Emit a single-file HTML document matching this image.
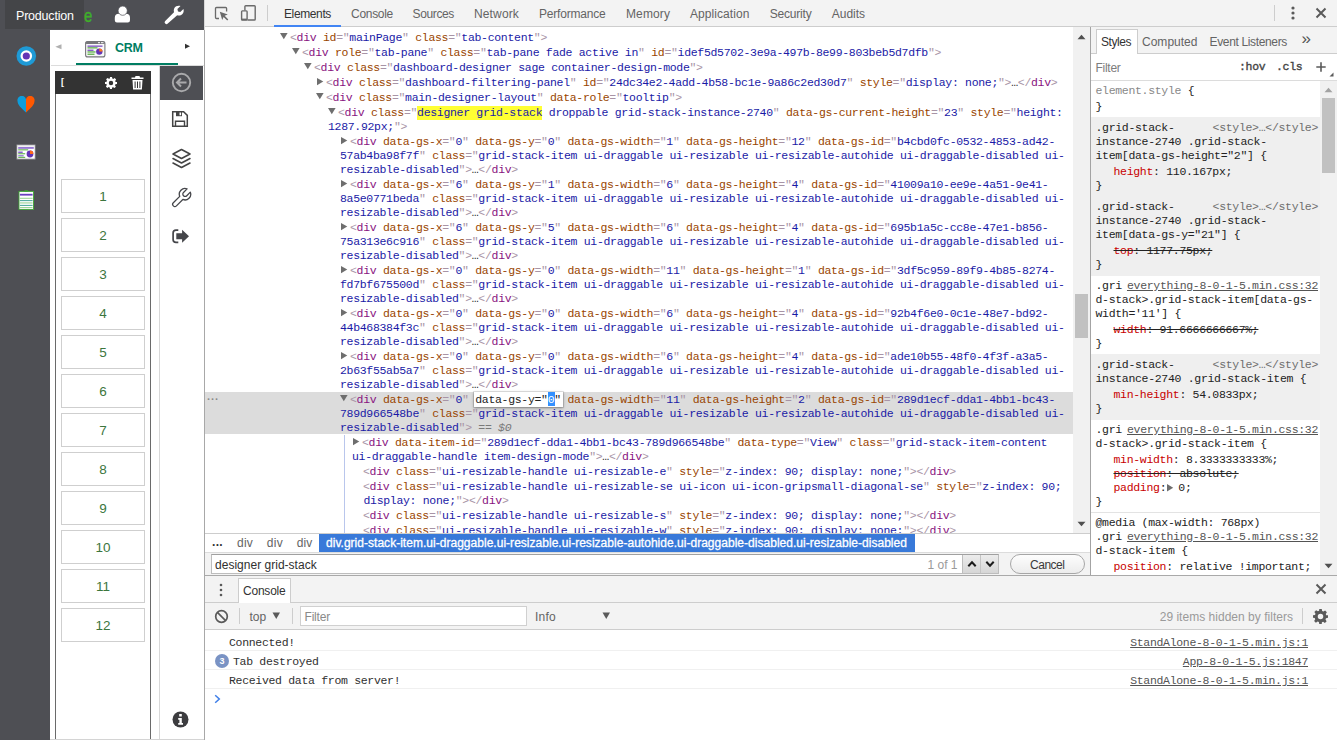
<!DOCTYPE html>
<html lang="en">
<head>
<meta charset="utf-8">
<title>CRM - DevTools</title>
<style>
*{box-sizing:border-box;margin:0;padding:0}
html,body{width:1337px;height:740px;overflow:hidden;background:#fff}
body{position:relative;font-family:"Liberation Sans",sans-serif;font-size:12px;color:#333}
.abs{position:absolute}
/* ---------- left app ---------- */
#app{position:absolute;left:0;top:0;width:205px;height:740px;background:#fff;overflow:hidden}
#side{position:absolute;left:0;top:0;width:50px;height:740px;background:#4e4f54}
#topbar{position:absolute;left:0;top:0;width:204px;height:30px;background:#4e4f54}
#tip{position:absolute;left:5px;top:0;width:79px;height:29px;background:#444548;color:#fff;font-size:12.5px;line-height:32px;overflow:hidden;padding-left:11px;letter-spacing:-.2px}
/* ---------- devtools ---------- */
#dt{position:absolute;left:205px;top:0;width:1132px;height:740px;background:#fff}
.mono,.ln{font-family:"Liberation Mono",monospace;font-size:11.5px}
.ln{position:absolute;white-space:pre;line-height:14px;height:14px;color:#2a2a2a;letter-spacing:-.314px}
.t{color:#a894a6}.n{color:#881280}.a{color:#994500}.v{color:#1a1aa6}
.hl{background:#ffff33;display:inline-block;height:14px;line-height:14px;vertical-align:top}
.tri{position:absolute;fill:#6e6e6e}
.edit{color:#222}
.selch{color:#fff}
.dollar{color:#7a7a7a;font-style:italic}
.sl{color:#222}
.p{color:#c80000}.g{color:#888}
.st{text-decoration:line-through}
.lk1{color:#6e6e6e;left:auto}
.lk2{color:#545454;text-decoration:underline;left:auto}
.ptri{fill:#6e6e6e;margin:0 -2.5px -1px 1px}
.s{position:absolute;white-space:pre;font-size:12px;line-height:16px;height:16px;color:#5a5a5a}
.nb{left:61px;width:84px;height:34px;border:1px solid #cfcfcf;background:#fff;text-align:center;font-size:13.5px;line-height:34px;color:#3c763d}
</style>
</head>
<body>
<div id="app">
 <div id="side"></div>
 <div id="topbar"></div>
 <div class="abs" style="left:84.300px;top:4px;color:#3fae2a;-webkit-text-stroke:.45px #3fae2a;font-size:18.500px;line-height:24px;transform:scaleX(.8);transform-origin:0 0">e</div>
 <div id="tip">Production</div>
 <!-- user -->
 <svg class="abs" style="left:114px;top:6px" width="17" height="17" viewBox="0 0 17 17"><path d="M.8 14.300V11.800A4 4 0 0 1 4.800 7.800H12A4 4 0 0 1 16 11.800V14.300A2.200 2.200 0 0 1 13.800 16.500H3A2.200 2.200 0 0 1 .8 14.300z" fill="#fff"/><circle cx="8.700" cy="4.700" r="4.600" fill="#fff" stroke="#4e4f54" stroke-width=".7"/></svg>
 <!-- wrench -->
 <svg class="abs" style="left:163px;top:5px" width="21" height="20" viewBox="0 0 21 20"><path d="M2.200 18.600a1.800 1.800 0 0 1 0-2.600L11 7.200C10.300 4.800 11.200 2.400 13.200 1.300c1.300-.7 3-.8 4.300-.3L14.400 4.100l.6 2.300 2.300 .6 3.100-3.100c.5 1.400 .4 3-.4 4.300-1.200 1.900-3.500 2.800-5.800 2.100L4.800 18.600a1.800 1.800 0 0 1-2.600 0z" fill="#fff"/></svg>
 <!-- side icons -->
 <svg class="abs" style="left:15px;top:45px" width="23" height="22" viewBox="0 0 23 22"><circle cx="11.300" cy="11" r="9.800" fill="#1e9ad6"/><circle cx="11.300" cy="11" r="5.800" fill="#fff"/><circle cx="11.300" cy="11" r="3.600" fill="#6435b5"/></svg>
 <svg class="abs" style="left:17px;top:96px" width="18" height="17" viewBox="0 0 18 17"><path d="M9 16.500C4 12 .5 8.500 .5 5A4.300 4.300 0 0 1 9 3.300z" fill="#0d9ddb"/><path d="M9 16.500C14 12 17.500 8.500 17.500 5A4.300 4.300 0 0 0 9 3.300z" fill="#ff5800"/></svg>
 <svg class="abs" style="left:16px;top:144px" width="20" height="16" viewBox="0 0 20 16"><rect x=".6" y=".6" width="18.800" height="14.800" rx="1.200" fill="#fff" stroke="#727276" stroke-width="1.200"/><rect x="1.200" y="1.200" width="17.600" height="1.200" fill="#dcdce0"/><rect x="2.200" y="3.300" width="15.600" height="1.300" fill="#6a3fc0"/><rect x="2.200" y="5.300" width="10" height="1.100" fill="#5fb04a"/><rect x="2.200" y="7.600" width="4.500" height="1.200" fill="#6a3fc0"/><rect x="2.200" y="9.200" width="7" height="1.100" fill="#5fb04a"/><rect x="2.200" y="11.200" width="5.500" height="1.200" fill="#8a6fd0"/><rect x="2.200" y="12.800" width="7" height="1.100" fill="#5fb04a"/><circle cx="14" cy="10" r="3.400" fill="#6435b5"/><path d="M14 10V6.600A3.400 3.400 0 0 1 17.400 10z" fill="#ff6a1a"/></svg>
 <svg class="abs" style="left:18px;top:190px" width="17" height="21" viewBox="0 0 17 21"><rect x="1" y="1.400" width="14.500" height="18" fill="#fff" stroke="#3fa535" stroke-width=".9"/><rect x="6.200" y=".3" width="4" height="1.500" rx=".7" fill="#3fa535"/><rect x="1.900" y="3.800" width="12.700" height="1.800" fill="#6a3fc0"/><rect x="1.900" y="7.800" width="12.700" height=".9" fill="#86c97e"/><rect x="1.900" y="10.200" width="12.700" height=".9" fill="#2f9a8c"/><rect x="1.900" y="12.500" width="12.700" height=".9" fill="#86c97e"/><rect x="1.900" y="14.900" width="12.700" height=".9" fill="#2f9a8c"/><rect x="1.900" y="17.200" width="12.700" height=".9" fill="#86c97e"/></svg>
 <!-- tab row -->
 <svg class="abs" style="left:55px;top:44px" width="7" height="6" viewBox="0 0 7 6"><path d="M6.500 .3V5.300L.3 2.800z" fill="#b0b0b0"/></svg>
 <svg class="abs" style="left:85px;top:41px" width="21" height="17" viewBox="0 0 21 17"><rect x=".6" y=".6" width="19.300" height="15.300" rx="2" fill="#f8f8f8" stroke="#77777b" stroke-width="1.100"/><rect x=".6" y=".6" width="19.300" height="2.400" rx="1" fill="#77777b"/><rect x="13" y="1.200" width="2" height="1" fill="#fff"/><rect x="16" y="1.200" width="2.500" height="1" fill="#fff"/><rect x="2.500" y="4.500" width="15" height="1.300" fill="#7a4fc0"/><rect x="2.500" y="6.200" width="10" height="1.300" fill="#5fb04a"/><rect x="2.500" y="8.600" width="6" height="1.300" fill="#7a4fc0"/><rect x="2.500" y="10.300" width="8" height="1.300" fill="#5fb04a"/><rect x="2.500" y="12.600" width="7" height="1.300" fill="#5fb04a"/><circle cx="14.300" cy="10.600" r="3.200" fill="#6435b5"/><path d="M14.300 10.600V7.400A3.200 3.200 0 0 1 17.500 10.600z" fill="#ff7a1a"/></svg>
 <div class="abs" style="left:115px;top:40px;font-weight:bold;font-size:12.500px;line-height:16px;color:#007d62;letter-spacing:-.3px">CRM</div>
 <svg class="abs" style="left:184px;top:43px" width="7" height="7" viewBox="0 0 7 7"><path d="M1 .8V5.800L6 3.300z" fill="#333"/></svg>
 <div class="abs" style="left:51px;top:65px;width:153px;height:1px;background:#dcdcdc"></div>
 <div class="abs" style="left:76px;top:63px;width:102px;height:2px;background:#007d62"></div>
 <!-- widget panel -->
 <div class="abs" style="left:55px;top:71px;width:96px;height:680px;border:1px solid #6a6a6a;background:#fff"></div>
 <div class="abs" style="left:55px;top:71px;width:96px;height:23px;background:#333"></div>
 <div class="abs" style="left:61px;top:76px;color:#fff;font-size:9px;font-weight:bold;line-height:12px">[</div>
 <svg class="abs" style="left:105px;top:77px" width="12" height="12" viewBox="0 0 12 12"><path fill="#fff" fill-rule="evenodd" d="M5 0h2l.3 1.600 1 .4 1.400-.9 1.400 1.400-.9 1.400 .4 1L12 5v2l-1.600 .3-.4 1 .9 1.400-1.400 1.400-1.400-.9-1 .4L7 12H5l-.3-1.600-1-.4-1.400 .9L.9 9.500l.9-1.400-.4-1L0 7V5l1.600-.3 .4-1-.9-1.400L2.500 .9l1.400 .9 1-.4zM6 3.800a2.200 2.200 0 1 0 0 4.400 2.200 2.200 0 0 0 0-4.400z"/></svg>
 <svg class="abs" style="left:131px;top:76px" width="13" height="14" viewBox="0 0 13 14"><path fill="#fff" d="M4.500 0h4l.5 1.500H12.500V3H.5V1.500H4zM1.500 4h10l-.6 9.500H2.100zM3.600 5.500v6.500h1V5.500zM6 5.500v6.500h1V5.500zM8.400 5.500v6.500h1V5.500z" fill-rule="evenodd"/></svg>
 <div class="abs nb" style="top:179px">1</div>
<div class="abs nb" style="top:218px">2</div>
<div class="abs nb" style="top:257px">3</div>
<div class="abs nb" style="top:296px">4</div>
<div class="abs nb" style="top:335px">5</div>
<div class="abs nb" style="top:374px">6</div>
<div class="abs nb" style="top:413px">7</div>
<div class="abs nb" style="top:452px">8</div>
<div class="abs nb" style="top:491px">9</div>
<div class="abs nb" style="top:530px">10</div>
<div class="abs nb" style="top:569px">11</div>
<div class="abs nb" style="top:608px">12</div>

 <!-- tool column -->
 <div class="abs" style="left:159px;top:66px;width:1px;height:674px;background:#d8d8d8"></div>
 <div class="abs" style="left:160px;top:66px;width:43px;height:34px;background:#4e4f54"></div>
 <svg class="abs" style="left:171px;top:72px" width="21" height="21" viewBox="0 0 21 21"><circle cx="10.500" cy="10.500" r="8.700" fill="none" stroke="#a9a9ab" stroke-width="1.900"/><path d="M15.500 10.500H6.500M10 6.500l-4 4 4 4" fill="none" stroke="#a9a9ab" stroke-width="2"/></svg>
 <!-- save -->
 <svg class="abs" style="left:171px;top:110px" width="18" height="18" viewBox="0 0 18 18"><path d="M1.700 1.700H12.600L16.300 5.400V16.300H1.700z" fill="none" stroke="#444" stroke-width="1.500"/><rect x="5" y="1.700" width="6" height="4.500" fill="#444"/><rect x="8.500" y="2.500" width="1.600" height="2.800" fill="#fff"/><path d="M4.500 16V11.200h9V16" fill="none" stroke="#444" stroke-width="1.400"/></svg>
 <!-- layers -->
 <svg class="abs" style="left:171px;top:148px" width="21" height="21" viewBox="0 0 21 21"><path d="M10.500 1.500L19 6l-8.500 4.500L2 6z" fill="none" stroke="#444" stroke-width="1.600" stroke-linejoin="round"/><path d="M2 10.500l8.500 4.500 8.500-4.500M2 15l8.500 4.500L19 15" fill="none" stroke="#444" stroke-width="1.600" stroke-linejoin="round" stroke-linecap="round"/></svg>
 <!-- wrench outline -->
 <svg class="abs" style="left:171px;top:187px" width="22" height="22" viewBox="0 0 22 22"><path transform="translate(14 7.200) rotate(45)" d="M-2.300 -5.220V-.2A2.300 2.300 0 0 0 2.300 -.2V-5.220A5.700 5.700 0 0 1 2.200 5.260V14.300A2.200 2.200 0 0 1 -2.200 14.300V5.260A5.700 5.700 0 0 1 -2.300 -5.220Z" fill="#fff" stroke="#45464a" stroke-width="1.300" stroke-linejoin="round"/></svg>
 <!-- sign out -->
 <svg class="abs" style="left:172px;top:229px" width="18" height="15" viewBox="0 0 18 15"><path d="M6.300 1.100H4A2.900 2.900 0 0 0 1.100 4v6.400A2.900 2.900 0 0 0 4 13.300h2.300" fill="none" stroke="#45464a" stroke-width="1.700"/><path d="M4.300 4.200h5.800V.7L17 7.200 10.100 13.700v-3.500H4.300z" fill="#45464a"/></svg>
 <!-- info -->
 <svg class="abs" style="left:171.500px;top:710.500px" width="17" height="17" viewBox="0 0 17 17"><circle cx="8.500" cy="8.500" r="8" fill="#3c3c3f"/><path d="M7.200 3h2.600v2.400H7.200zM6.200 7h3.600v5h1.200v1.800H6.200V12h1.200V8.800H6.200z" fill="#fff"/></svg>
 <div class="abs" style="left:50px;top:739px;width:155px;height:1px;background:#d4d4d4"></div>
 <div class="abs" style="left:204px;top:0;width:1px;height:30px;background:#d8d8d8"></div>
 <div class="abs" style="left:204px;top:30px;width:1px;height:710px;background:#a8a8a8"></div>
</div>

<div id="dtbg" class="abs" style="left:205px;top:0;width:1132px;height:740px;background:#fff"></div>
<!-- elements tree -->
<div class="abs" style="left:205px;top:27px;width:868px;height:506px;overflow:hidden">
 <div class="abs" style="left:-205px;top:-27px;width:1337px;height:740px">
  <div class="abs" style="left:205px;top:392px;width:868px;height:42px;background:#dcdcdc"></div>
  <div class="abs" style="left:344px;top:435px;width:1px;height:100px;background:#b9c6ec"></div>
  <div class="abs" style="left:207px;top:390px;color:#8a8a8a;font-size:11px;line-height:12px;letter-spacing:1px;font-weight:bold">...</div>
  <div class="abs" style="left:474px;top:392px;width:89px;height:15px;background:#fff;box-shadow:0 0 0 1px rgba(0,0,0,.10),0 1px 3px rgba(0,0,0,.38)"></div>
  <div class="abs" style="left:548px;top:392px;width:7px;height:14px;background:#3390ff"></div>
<div class="ln" style="left:290px;top:31px"><span class="t">&lt;</span><span class="n">div</span> <span class="a">id</span><span class="t">="</span><span class="v">mainPage</span><span class="t">"</span> <span class="a">class</span><span class="t">="</span><span class="v">tab-content</span><span class="t">"</span><span class="t">&gt;</span></div>
<svg class="tri" style="left:280px;top:33px" width="8" height="7" viewBox="0 0 8 7"><path d="M0 0H7.6L3.8 6.2Z"/></svg>
<div class="ln" style="left:302px;top:46px"><span class="t">&lt;</span><span class="n">div</span> <span class="a">role</span><span class="t">="</span><span class="v">tab-pane</span><span class="t">"</span> <span class="a">class</span><span class="t">="</span><span class="v">tab-pane fade active in</span><span class="t">"</span> <span class="a">id</span><span class="t">="</span><span class="v">idef5d5702-3e9a-497b-8e99-803beb5d7dfb</span><span class="t">"</span><span class="t">&gt;</span></div>
<svg class="tri" style="left:292px;top:48px" width="8" height="7" viewBox="0 0 8 7"><path d="M0 0H7.6L3.8 6.2Z"/></svg>
<div class="ln" style="left:314px;top:61px"><span class="t">&lt;</span><span class="n">div</span> <span class="a">class</span><span class="t">="</span><span class="v">dashboard-designer sage container-design-mode</span><span class="t">"</span><span class="t">&gt;</span></div>
<svg class="tri" style="left:304px;top:63px" width="8" height="7" viewBox="0 0 8 7"><path d="M0 0H7.6L3.8 6.2Z"/></svg>
<div class="ln" style="left:326px;top:76px"><span class="t">&lt;</span><span class="n">div</span> <span class="a">class</span><span class="t">="</span><span class="v">dashboard-filtering-panel</span><span class="t">"</span> <span class="a">id</span><span class="t">="</span><span class="v">24dc34e2-4add-4b58-bc1e-9a86c2ed30d7</span><span class="t">"</span> <span class="a">style</span><span class="t">="</span><span class="v">display: none;</span><span class="t">"</span><span class="t">&gt;</span>…<span class="t">&lt;/</span><span class="n">div</span><span class="t">&gt;</span></div>
<svg class="tri" style="left:317px;top:78px" width="7" height="8" viewBox="0 0 7 8"><path d="M0 0V7.200L6.300 3.600Z"/></svg>
<div class="ln" style="left:326px;top:91px"><span class="t">&lt;</span><span class="n">div</span> <span class="a">class</span><span class="t">="</span><span class="v">main-designer-layout</span><span class="t">"</span> <span class="a">data-role</span><span class="t">="</span><span class="v">tooltip</span><span class="t">"</span><span class="t">&gt;</span></div>
<svg class="tri" style="left:316px;top:93px" width="8" height="7" viewBox="0 0 8 7"><path d="M0 0H7.6L3.8 6.2Z"/></svg>
<div class="ln" style="left:338px;top:106px"><span class="t">&lt;</span><span class="n">div</span> <span class="a">class</span><span class="t">="</span><span class="v"><span class="hl">designer grid-stack</span> droppable grid-stack-instance-2740</span><span class="t">"</span> <span class="a">data-gs-current-height</span><span class="t">="</span><span class="v">23</span><span class="t">"</span> <span class="a">style</span><span class="t">="</span><span class="v">height:</span></div>
<div class="ln" style="left:328px;top:120px"><span class="v">1287.92px;</span><span class="t">"</span><span class="t">&gt;</span></div>
<svg class="tri" style="left:328px;top:108px" width="8" height="7" viewBox="0 0 8 7"><path d="M0 0H7.6L3.8 6.2Z"/></svg>
<div class="ln" style="left:350px;top:135px"><span class="t">&lt;</span><span class="n">div</span> <span class="a">data-gs-x</span><span class="t">="</span><span class="v">0</span><span class="t">"</span> <span class="a">data-gs-y</span><span class="t">="</span><span class="v">0</span><span class="t">"</span> <span class="a">data-gs-width</span><span class="t">="</span><span class="v">1</span><span class="t">"</span> <span class="a">data-gs-height</span><span class="t">="</span><span class="v">12</span><span class="t">"</span> <span class="a">data-gs-id</span><span class="t">="</span><span class="v">b4cbd0fc-0532-4853-ad42-</span></div>
<div class="ln" style="left:340px;top:149px"><span class="v">57ab4ba98f7f</span><span class="t">"</span> <span class="a">class</span><span class="t">="</span><span class="v">grid-stack-item ui-draggable ui-resizable ui-resizable-autohide ui-draggable-disabled ui-</span></div>
<div class="ln" style="left:340px;top:163px"><span class="v">resizable-disabled</span><span class="t">"</span><span class="t">&gt;</span>…<span class="t">&lt;/</span><span class="n">div</span><span class="t">&gt;</span></div>
<svg class="tri" style="left:341px;top:137px" width="7" height="8" viewBox="0 0 7 8"><path d="M0 0V7.200L6.300 3.600Z"/></svg>
<div class="ln" style="left:350px;top:178px"><span class="t">&lt;</span><span class="n">div</span> <span class="a">data-gs-x</span><span class="t">="</span><span class="v">6</span><span class="t">"</span> <span class="a">data-gs-y</span><span class="t">="</span><span class="v">1</span><span class="t">"</span> <span class="a">data-gs-width</span><span class="t">="</span><span class="v">6</span><span class="t">"</span> <span class="a">data-gs-height</span><span class="t">="</span><span class="v">4</span><span class="t">"</span> <span class="a">data-gs-id</span><span class="t">="</span><span class="v">41009a10-ee9e-4a51-9e41-</span></div>
<div class="ln" style="left:340px;top:192px"><span class="v">8a5e0771beda</span><span class="t">"</span> <span class="a">class</span><span class="t">="</span><span class="v">grid-stack-item ui-draggable ui-resizable ui-resizable-autohide ui-draggable-disabled ui-</span></div>
<div class="ln" style="left:340px;top:206px"><span class="v">resizable-disabled</span><span class="t">"</span><span class="t">&gt;</span>…<span class="t">&lt;/</span><span class="n">div</span><span class="t">&gt;</span></div>
<svg class="tri" style="left:341px;top:180px" width="7" height="8" viewBox="0 0 7 8"><path d="M0 0V7.200L6.300 3.600Z"/></svg>
<div class="ln" style="left:350px;top:221px"><span class="t">&lt;</span><span class="n">div</span> <span class="a">data-gs-x</span><span class="t">="</span><span class="v">6</span><span class="t">"</span> <span class="a">data-gs-y</span><span class="t">="</span><span class="v">5</span><span class="t">"</span> <span class="a">data-gs-width</span><span class="t">="</span><span class="v">6</span><span class="t">"</span> <span class="a">data-gs-height</span><span class="t">="</span><span class="v">4</span><span class="t">"</span> <span class="a">data-gs-id</span><span class="t">="</span><span class="v">695b1a5c-cc8e-47e1-b856-</span></div>
<div class="ln" style="left:340px;top:235px"><span class="v">75a313e6c916</span><span class="t">"</span> <span class="a">class</span><span class="t">="</span><span class="v">grid-stack-item ui-draggable ui-resizable ui-resizable-autohide ui-draggable-disabled ui-</span></div>
<div class="ln" style="left:340px;top:249px"><span class="v">resizable-disabled</span><span class="t">"</span><span class="t">&gt;</span>…<span class="t">&lt;/</span><span class="n">div</span><span class="t">&gt;</span></div>
<svg class="tri" style="left:341px;top:223px" width="7" height="8" viewBox="0 0 7 8"><path d="M0 0V7.200L6.300 3.600Z"/></svg>
<div class="ln" style="left:350px;top:264px"><span class="t">&lt;</span><span class="n">div</span> <span class="a">data-gs-x</span><span class="t">="</span><span class="v">0</span><span class="t">"</span> <span class="a">data-gs-y</span><span class="t">="</span><span class="v">0</span><span class="t">"</span> <span class="a">data-gs-width</span><span class="t">="</span><span class="v">11</span><span class="t">"</span> <span class="a">data-gs-height</span><span class="t">="</span><span class="v">1</span><span class="t">"</span> <span class="a">data-gs-id</span><span class="t">="</span><span class="v">3df5c959-89f9-4b85-8274-</span></div>
<div class="ln" style="left:340px;top:278px"><span class="v">fd7bf675500d</span><span class="t">"</span> <span class="a">class</span><span class="t">="</span><span class="v">grid-stack-item ui-draggable ui-resizable ui-resizable-autohide ui-draggable-disabled ui-</span></div>
<div class="ln" style="left:340px;top:292px"><span class="v">resizable-disabled</span><span class="t">"</span><span class="t">&gt;</span>…<span class="t">&lt;/</span><span class="n">div</span><span class="t">&gt;</span></div>
<svg class="tri" style="left:341px;top:266px" width="7" height="8" viewBox="0 0 7 8"><path d="M0 0V7.200L6.300 3.600Z"/></svg>
<div class="ln" style="left:350px;top:307px"><span class="t">&lt;</span><span class="n">div</span> <span class="a">data-gs-x</span><span class="t">="</span><span class="v">0</span><span class="t">"</span> <span class="a">data-gs-y</span><span class="t">="</span><span class="v">0</span><span class="t">"</span> <span class="a">data-gs-width</span><span class="t">="</span><span class="v">6</span><span class="t">"</span> <span class="a">data-gs-height</span><span class="t">="</span><span class="v">4</span><span class="t">"</span> <span class="a">data-gs-id</span><span class="t">="</span><span class="v">92b4f6e0-0c1e-48e7-bd92-</span></div>
<div class="ln" style="left:340px;top:321px"><span class="v">44b468384f3c</span><span class="t">"</span> <span class="a">class</span><span class="t">="</span><span class="v">grid-stack-item ui-draggable ui-resizable ui-resizable-autohide ui-draggable-disabled ui-</span></div>
<div class="ln" style="left:340px;top:335px"><span class="v">resizable-disabled</span><span class="t">"</span><span class="t">&gt;</span>…<span class="t">&lt;/</span><span class="n">div</span><span class="t">&gt;</span></div>
<svg class="tri" style="left:341px;top:309px" width="7" height="8" viewBox="0 0 7 8"><path d="M0 0V7.200L6.300 3.600Z"/></svg>
<div class="ln" style="left:350px;top:350px"><span class="t">&lt;</span><span class="n">div</span> <span class="a">data-gs-x</span><span class="t">="</span><span class="v">0</span><span class="t">"</span> <span class="a">data-gs-y</span><span class="t">="</span><span class="v">0</span><span class="t">"</span> <span class="a">data-gs-width</span><span class="t">="</span><span class="v">6</span><span class="t">"</span> <span class="a">data-gs-height</span><span class="t">="</span><span class="v">4</span><span class="t">"</span> <span class="a">data-gs-id</span><span class="t">="</span><span class="v">ade10b55-48f0-4f3f-a3a5-</span></div>
<div class="ln" style="left:340px;top:364px"><span class="v">2b63f55ab5a7</span><span class="t">"</span> <span class="a">class</span><span class="t">="</span><span class="v">grid-stack-item ui-draggable ui-resizable ui-resizable-autohide ui-draggable-disabled ui-</span></div>
<div class="ln" style="left:340px;top:378px"><span class="v">resizable-disabled</span><span class="t">"</span><span class="t">&gt;</span>…<span class="t">&lt;/</span><span class="n">div</span><span class="t">&gt;</span></div>
<svg class="tri" style="left:341px;top:352px" width="7" height="8" viewBox="0 0 7 8"><path d="M0 0V7.200L6.300 3.600Z"/></svg>
<div class="ln" style="left:350px;top:393px"><span class="t">&lt;</span><span class="n">div</span> <span class="a">data-gs-x</span><span class="t">="</span><span class="v">0</span><span class="t">"</span> <span class="edit">data-gs-y="<span class="selch">0</span>"</span> <span class="a">data-gs-width</span><span class="t">="</span><span class="v">11</span><span class="t">"</span> <span class="a">data-gs-height</span><span class="t">="</span><span class="v">2</span><span class="t">"</span> <span class="a">data-gs-id</span><span class="t">="</span><span class="v">289d1ecf-dda1-4bb1-bc43-</span></div>
<div class="ln" style="left:340px;top:407px"><span class="v">789d966548be</span><span class="t">"</span> <span class="a">class</span><span class="t">="</span><span class="v">grid-stack-item ui-draggable ui-resizable ui-resizable-autohide ui-draggable-disabled ui-</span></div>
<div class="ln" style="left:340px;top:421px"><span class="v">resizable-disabled</span><span class="t">"</span><span class="t">&gt;</span><span class="dollar"> == $0</span></div>
<svg class="tri" style="left:340px;top:395px" width="8" height="7" viewBox="0 0 8 7"><path d="M0 0H7.6L3.8 6.2Z"/></svg>
<div class="ln" style="left:362px;top:436px"><span class="t">&lt;</span><span class="n">div</span> <span class="a">data-item-id</span><span class="t">="</span><span class="v">289d1ecf-dda1-4bb1-bc43-789d966548be</span><span class="t">"</span> <span class="a">data-type</span><span class="t">="</span><span class="v">View</span><span class="t">"</span> <span class="a">class</span><span class="t">="</span><span class="v">grid-stack-item-content</span></div>
<div class="ln" style="left:352px;top:450px"><span class="v">ui-draggable-handle item-design-mode</span><span class="t">"</span><span class="t">&gt;</span>…<span class="t">&lt;/</span><span class="n">div</span><span class="t">&gt;</span></div>
<svg class="tri" style="left:353px;top:438px" width="7" height="8" viewBox="0 0 7 8"><path d="M0 0V7.200L6.300 3.600Z"/></svg>
<div class="ln" style="left:363px;top:465px"><span class="t">&lt;</span><span class="n">div</span> <span class="a">class</span><span class="t">="</span><span class="v">ui-resizable-handle ui-resizable-e</span><span class="t">"</span> <span class="a">style</span><span class="t">="</span><span class="v">z-index: 90; display: none;</span><span class="t">"</span><span class="t">&gt;</span><span class="t">&lt;/</span><span class="n">div</span><span class="t">&gt;</span></div>
<div class="ln" style="left:363px;top:480px"><span class="t">&lt;</span><span class="n">div</span> <span class="a">class</span><span class="t">="</span><span class="v">ui-resizable-handle ui-resizable-se ui-icon ui-icon-gripsmall-diagonal-se</span><span class="t">"</span> <span class="a">style</span><span class="t">="</span><span class="v">z-index: 90;</span></div>
<div class="ln" style="left:363.5px;top:494px"><span class="v">display: none;</span><span class="t">"</span><span class="t">&gt;</span><span class="t">&lt;/</span><span class="n">div</span><span class="t">&gt;</span></div>
<div class="ln" style="left:363px;top:509px"><span class="t">&lt;</span><span class="n">div</span> <span class="a">class</span><span class="t">="</span><span class="v">ui-resizable-handle ui-resizable-s</span><span class="t">"</span> <span class="a">style</span><span class="t">="</span><span class="v">z-index: 90; display: none;</span><span class="t">"</span><span class="t">&gt;</span><span class="t">&lt;/</span><span class="n">div</span><span class="t">&gt;</span></div>
<div class="ln" style="left:363px;top:524px"><span class="t">&lt;</span><span class="n">div</span> <span class="a">class</span><span class="t">="</span><span class="v">ui-resizable-handle ui-resizable-w</span><span class="t">"</span> <span class="a">style</span><span class="t">="</span><span class="v">z-index: 90; display: none;</span><span class="t">"</span><span class="t">&gt;</span><span class="t">&lt;/</span><span class="n">div</span><span class="t">&gt;</span></div>

 </div>
</div>
<!-- elements scrollbar -->
<div class="abs" style="left:1073px;top:27px;width:17px;height:506px;background:#f1f1f1"></div>
<div class="abs" style="left:1075px;top:294px;width:13px;height:44px;background:#c1c1c1"></div>
<svg class="abs" style="left:1077px;top:34px" width="9" height="6" viewBox="0 0 9 6"><path d="M.5 5.200L4.500 .8 8.500 5.200z" fill="#505050"/></svg>
<svg class="abs" style="left:1077px;top:521px" width="9" height="6" viewBox="0 0 9 6"><path d="M.5 .8L4.500 5.200 8.500 .8z" fill="#505050"/></svg>
<!-- splitter -->
<div class="abs" style="left:1090px;top:27px;width:1px;height:549px;background:#a3a3a3"></div>
<!-- top toolbar -->
<div class="abs" style="left:205px;top:0;width:1132px;height:27px;background:#f3f3f3;border-bottom:1px solid #cdcdcd"></div>
<div class="abs" style="left:274px;top:25px;width:67px;height:2px;background:#4285f4"></div>
<svg class="abs" style="left:214px;top:6px" width="16" height="16" viewBox="0 0 16 16"><path d="M12.600 5.500V2.500A1 1 0 0 0 11.600 1.500H2.500A1 1 0 0 0 1.500 2.500v9A1 1 0 0 0 2.500 12.500h2.500" fill="none" stroke="#6a6a6a" stroke-width="1.300"/><path d="M5.800 5.800l8 2.600-3.100 1.400 3.600 3.600-1.100 1.100-3.600-3.600-1.400 3.100z" fill="#6a6a6a"/></svg>
<svg class="abs" style="left:240px;top:4px" width="17" height="18" viewBox="0 0 17 18"><path d="M4.900 6.500V2.600a.8 .8 0 0 1 .8-.8h8.700a.8 .8 0 0 1 .8 .8V15.200a.8 .8 0 0 1-.8 .8H7.500" fill="none" stroke="#6a6a6a" stroke-width="1.400"/><rect x="1.600" y="6.900" width="5.500" height="9.100" rx=".8" fill="#f3f3f3" stroke="#6a6a6a" stroke-width="1.400"/><rect x="1.600" y="14.600" width="5.500" height="1.600" fill="#6a6a6a"/></svg>
<div class="abs" style="left:267px;top:5px;width:1px;height:16px;background:#cdcdcd"></div>
<div class="abs" style="left:1274px;top:5px;width:1px;height:16px;background:#cdcdcd"></div>
<svg class="abs" style="left:1291.300px;top:6.400px" width="4" height="14" viewBox="0 0 4 14"><circle cx="2" cy="2" r="1.600" fill="#5a5a5a"/><circle cx="2" cy="7" r="1.600" fill="#5a5a5a"/><circle cx="2" cy="12" r="1.600" fill="#5a5a5a"/></svg>
<svg class="abs" style="left:1315px;top:7px" width="12" height="12" viewBox="0 0 12 12"><path d="M1.500 1.500l9 9M10.500 1.500l-9 9" stroke="#5a5a5a" stroke-width="2" fill="none"/></svg>
<!-- styles pane header -->
<div class="abs" style="left:1091px;top:27px;width:246px;height:27px;background:#f3f3f3;border-bottom:1px solid #cdcdcd"></div>
<div class="abs" style="left:1096px;top:29px;width:42px;height:25px;background:#fff;border:1px solid #cdcdcd;border-bottom:none"></div>
<div class="abs" style="left:1301.500px;top:29.500px;font-size:17px;line-height:18px;color:#555">»</div>
<!-- filter row -->
<div class="abs" style="left:1091px;top:54px;width:246px;height:27px;background:#fff;border-bottom:1px solid #dcdcdc"></div>
<div class="ln" style="left:1239px;top:60px;color:#444;-webkit-text-stroke:.35px #444">:hov</div>
<div class="ln" style="left:1276px;top:60px;color:#444;-webkit-text-stroke:.35px #444">.cls</div>
<svg class="abs" style="left:1315px;top:61px" width="12" height="12" viewBox="0 0 12 12"><path d="M6 1.300v9.400M1.300 6h9.400" stroke="#5a5a5a" stroke-width="1.600"/></svg>
<svg class="abs" style="left:1328.500px;top:72px" width="5" height="5" viewBox="0 0 5 5"><path d="M4.500 .5V4.500H.5z" fill="#5a5a5a"/></svg>
<!-- styles sections -->
<div class="abs" style="left:1091px;top:117px;width:229px;height:159px;background:#efefef"></div>
<div class="abs" style="left:1091px;top:354px;width:229px;height:66px;background:#efefef"></div>
<div class="abs" style="left:1091px;top:512px;width:229px;height:1px;background:#e3e3e3"></div>
<div class="abs" style="left:1091px;top:81px;width:246px;height:495px;overflow:hidden">
 <div class="abs" style="left:-1091px;top:-81px;width:1337px;height:740px">
<div class="ln sl" style="left:1095.5px;top:83.5px"><span class="g">element.style</span> {</div>
<div class="ln sl" style="left:1095.5px;top:100px">}</div>
<div class="ln sl" style="left:1095.5px;top:121px">.grid-stack-</div>
<div class="ln sl" style="left:1095.5px;top:135px">instance-2740 .grid-stack-</div>
<div class="ln sl" style="left:1095.5px;top:149px">item[data-gs-height="2"] {</div>
<div class="ln sl" style="left:1113.5px;top:164.5px"><span class="p">height</span>: 110.167px;</div>
<div class="ln sl" style="left:1095.5px;top:179px">}</div>
<div class="ln sl" style="left:1095.5px;top:200px">.grid-stack-</div>
<div class="ln sl" style="left:1095.5px;top:214px">instance-2740 .grid-stack-</div>
<div class="ln sl" style="left:1095.5px;top:228px">item[data-gs-y="21"] {</div>
<div class="ln sl" style="left:1113.5px;top:243.5px"><span class="st"><span class="p">top</span>: 1177.75px;</span></div>
<div class="ln sl" style="left:1095.5px;top:258px">}</div>
<div class="ln sl" style="left:1095.5px;top:279px">.gri</div>
<div class="ln sl" style="left:1095.5px;top:293px">d-stack&gt;.grid-stack-item[data-gs-</div>
<div class="ln sl" style="left:1095.5px;top:307px">width='11'] {</div>
<div class="ln sl" style="left:1113.5px;top:322.5px"><span class="st"><span class="p">width</span>: 91.6666666667%;</span></div>
<div class="ln sl" style="left:1095.5px;top:337px">}</div>
<div class="ln sl" style="left:1095.5px;top:358px">.grid-stack-</div>
<div class="ln sl" style="left:1095.5px;top:372px">instance-2740 .grid-stack-item {</div>
<div class="ln sl" style="left:1113.5px;top:387.5px"><span class="p">min-height</span>: 54.0833px;</div>
<div class="ln sl" style="left:1095.5px;top:402px">}</div>
<div class="ln sl" style="left:1095.5px;top:423px">.gri</div>
<div class="ln sl" style="left:1095.5px;top:437px">d-stack&gt;.grid-stack-item {</div>
<div class="ln sl" style="left:1113.5px;top:452.5px"><span class="p">min-width</span>: 8.3333333333%;</div>
<div class="ln sl" style="left:1113.5px;top:466.5px"><span class="st"><span class="p">position</span>: absolute;</span></div>
<div class="ln sl" style="left:1113.5px;top:480.5px"><span class="p">padding</span>:<svg class="ptri" width="7" height="8" viewBox="0 0 7 8"><path d="M0 0V7.6L6.2 3.8Z"/></svg> 0;</div>
<div class="ln sl" style="left:1095.5px;top:494.5px">}</div>
<div class="ln sl" style="left:1095.5px;top:515.5px">@media (max-width: 768px)</div>
<div class="ln sl" style="left:1095.5px;top:529.5px">.gri</div>
<div class="ln sl" style="left:1095.5px;top:543.5px">d-stack-item {</div>
<div class="ln sl" style="left:1113.5px;top:559.5px"><span class="p">position</span>: relative !important;</div>
<div class="ln sl lk1" style="right:19px;top:121px">&lt;style&gt;…&lt;/style&gt;</div>
<div class="ln sl lk1" style="right:19px;top:200px">&lt;style&gt;…&lt;/style&gt;</div>
<div class="ln sl lk1" style="right:19px;top:358px">&lt;style&gt;…&lt;/style&gt;</div>
<div class="ln sl lk2" style="right:19px;top:279px">everything-8-0-1-5.min.css:32</div>
<div class="ln sl lk2" style="right:19px;top:423px">everything-8-0-1-5.min.css:32</div>
<div class="ln sl lk2" style="right:19px;top:529.5px">everything-8-0-1-5.min.css:32</div>

 </div>
</div>
<!-- styles scrollbar -->
<div class="abs" style="left:1320px;top:81px;width:17px;height:495px;background:#f1f1f1"></div>
<div class="abs" style="left:1322px;top:98px;width:13px;height:75px;background:#c1c1c1"></div>
<svg class="abs" style="left:1324px;top:87px" width="9" height="6" viewBox="0 0 9 6"><path d="M.5 5.200L4.500 .8 8.500 5.200z" fill="#a3a3a3"/></svg>
<svg class="abs" style="left:1324px;top:563px" width="9" height="6" viewBox="0 0 9 6"><path d="M.5 .8L4.500 5.200 8.500 .8z" fill="#505050"/></svg>
<!-- breadcrumbs -->
<div class="abs" style="left:205px;top:533px;width:885px;height:20px;background:#fff;border-top:1px solid #cdcdcd;border-bottom:1px solid #dcdcdc"></div>
<div class="abs" style="left:319px;top:534px;width:596px;height:18px;background:#3879d9"></div>
<div class="abs" style="left:212px;top:534px;font-size:12px;font-weight:bold;line-height:16px;color:#333;letter-spacing:.3px">...</div>
<!-- search bar -->
<div class="abs" style="left:205px;top:553px;width:885px;height:23px;background:#f3f3f3;border-bottom:1px solid #a9a9a9"></div>
<div class="abs" style="left:211px;top:554px;width:788px;height:20px;background:#fff;border:1px solid #bdbdbd;border-top-color:#a0a0a0"></div>
<div class="abs" style="left:962px;top:555px;width:36px;height:18px;background:linear-gradient(#ececec,#d6d6d6);border-left:1px solid #bdbdbd"></div>
<div class="abs" style="left:980px;top:555px;width:1px;height:18px;background:#c4c4c4"></div>
<svg class="abs" style="left:967px;top:560px" width="10" height="8" viewBox="0 0 10 8"><path d="M1.300 6.300L5 2.300 8.700 6.300" fill="none" stroke="#1c1c1c" stroke-width="2"/></svg>
<svg class="abs" style="left:985px;top:560px" width="10" height="8" viewBox="0 0 10 8"><path d="M1.300 1.700L5 5.700 8.700 1.700" fill="none" stroke="#1c1c1c" stroke-width="2"/></svg>
<div class="abs" style="left:1010px;top:554px;width:75px;height:20px;border:1px solid #a6a6a6;border-radius:10px;background:linear-gradient(#fdfdfd,#ececec)"></div>
<!-- drawer header -->
<div class="abs" style="left:205px;top:576px;width:1132px;height:27px;background:#f3f3f3;border-bottom:1px solid #cdcdcd"></div>
<div class="abs" style="left:205px;top:575px;width:1132px;height:1px;background:#a9a9a9"></div>
<svg class="abs" style="left:219px;top:583px" width="4" height="14" viewBox="0 0 4 14"><circle cx="2" cy="2" r="1.300" fill="#5a5a5a"/><circle cx="2" cy="7" r="1.300" fill="#5a5a5a"/><circle cx="2" cy="12" r="1.300" fill="#5a5a5a"/></svg>
<div class="abs" style="left:238px;top:578px;width:53px;height:25px;background:#fff;border:1px solid #cdcdcd;border-bottom:none"></div>
<svg class="abs" style="left:1315px;top:583px" width="12" height="12" viewBox="0 0 12 12"><path d="M1.500 1.500l9 9M10.500 1.500l-9 9" stroke="#5a5a5a" stroke-width="2" fill="none"/></svg>
<!-- console toolbar -->
<div class="abs" style="left:205px;top:603px;width:1132px;height:27px;background:#f3f3f3;border-bottom:1px solid #cdcdcd"></div>
<svg class="abs" style="left:214px;top:609px" width="15" height="15" viewBox="0 0 15 15"><circle cx="7.500" cy="7.500" r="5.800" fill="none" stroke="#5a5a5a" stroke-width="1.700"/><path d="M3.400 3.400l8.200 8.200" stroke="#5a5a5a" stroke-width="1.700"/></svg>
<div class="abs" style="left:239px;top:608px;width:1px;height:16px;background:#cdcdcd"></div>
<svg class="abs" style="left:272px;top:612px" width="9" height="8" viewBox="0 0 9 8"><path d="M.5 .5H8L4.250 7z" fill="#5a5a5a"/></svg>
<div class="abs" style="left:292px;top:608px;width:1px;height:16px;background:#cdcdcd"></div>
<div class="abs" style="left:300px;top:606px;width:227px;height:20px;background:#fff;border:1px solid #d0d0d0"></div>
<svg class="abs" style="left:601.500px;top:612px" width="9" height="8" viewBox="0 0 9 8"><path d="M.5 .5H8L4.250 7z" fill="#5a5a5a"/></svg>
<div class="abs" style="left:1302px;top:608px;width:1px;height:16px;background:#cdcdcd"></div>
<svg class="abs" style="left:1313px;top:609px" width="15" height="15" viewBox="0 0 12 12"><path fill="#5a5a5a" fill-rule="evenodd" d="M5 0h2l.3 1.600 1 .4 1.400-.9 1.400 1.400-.9 1.400 .4 1L12 5v2l-1.600 .3-.4 1 .9 1.400-1.400 1.400-1.400-.9-1 .4L7 12H5l-.3-1.600-1-.4-1.400 .9L.9 9.500l.9-1.400-.4-1L0 7V5l1.600-.3 .4-1-.9-1.400L2.500 .9l1.400 .9 1-.4zM6 3.800a2.200 2.200 0 1 0 0 4.400 2.200 2.200 0 0 0 0-4.400z"/></svg>
<!-- console messages -->
<div class="abs" style="left:205px;top:650px;width:1132px;height:1px;background:#f0f0f0"></div>
<div class="abs" style="left:205px;top:669px;width:1132px;height:1px;background:#f0f0f0"></div>
<div class="abs" style="left:205px;top:688px;width:1132px;height:1px;background:#f0f0f0"></div>
<div class="ln" style="left:229px;top:636px;color:#303030">Connected!</div>
<div class="ln" style="left:233px;top:655px;color:#303030">Tab destroyed</div>
<div class="ln" style="left:229px;top:674px;color:#303030">Received data from server!</div>
<div class="abs" style="left:215px;top:654px;width:14px;height:14px;border-radius:7px;background:#7a93c4;color:#fff;font-size:9px;font-weight:bold;line-height:14px;text-align:center">3</div>
<div class="ln lk2" style="right:29px;top:636px">StandAlone-8-0-1-5.min.js:1</div>
<div class="ln lk2" style="right:29px;top:655px">App-8-0-1-5.js:1847</div>
<div class="ln lk2" style="right:29px;top:674px">StandAlone-8-0-1-5.min.js:1</div>
<svg class="abs" style="left:214px;top:694px" width="7" height="10" viewBox="0 0 7 10"><path d="M1.200 1.200L5.300 5 1.200 8.800" fill="none" stroke="#3f7fe8" stroke-width="1.500"/></svg>
<span class="s" style="left:284px;top:6px;font-size:12px;color:#333;letter-spacing:-0.379px;">Elements</span>
<span class="s" style="left:351px;top:6px;font-size:12px;color:#646464;letter-spacing:-0.290px;">Console</span>
<span class="s" style="left:412.5px;top:6px;font-size:12px;color:#646464;letter-spacing:-0.362px;">Sources</span>
<span class="s" style="left:474px;top:6px;font-size:12px;color:#646464;letter-spacing:0.141px;">Network</span>
<span class="s" style="left:539px;top:6px;font-size:12px;color:#646464;letter-spacing:-0.200px;">Performance</span>
<span class="s" style="left:626px;top:6px;font-size:12px;color:#646464;letter-spacing:0.109px;">Memory</span>
<span class="s" style="left:690px;top:6px;font-size:12px;color:#646464;letter-spacing:0.071px;">Application</span>
<span class="s" style="left:769.8px;top:6px;font-size:12px;color:#646464;letter-spacing:-0.207px;">Security</span>
<span class="s" style="left:831.8px;top:6px;font-size:12px;color:#646464;letter-spacing:-0.027px;">Audits</span>
<span class="s" style="left:1101px;top:33.5px;font-size:12px;color:#333;letter-spacing:-0.448px;">Styles</span>
<span class="s" style="left:1142px;top:33.5px;font-size:12px;color:#646464;letter-spacing:0.016px;">Computed</span>
<span class="s" style="left:1209.5px;top:33.5px;font-size:12px;color:#646464;letter-spacing:-0.348px;">Event Listeners</span>
<span class="s" style="left:1095.5px;top:59.5px;font-size:12px;color:#7d7d7d;letter-spacing:-0.279px;">Filter</span>
<span class="s" style="left:237px;top:535px;font-size:12px;color:#646464;letter-spacing:0.219px;">div</span>
<span class="s" style="left:266.7px;top:535px;font-size:12px;color:#646464;letter-spacing:0.319px;">div</span>
<span class="s" style="left:296.7px;top:535px;font-size:12px;color:#646464;letter-spacing:0.152px;">div</span>
<span class="s" style="left:326px;top:534.5px;font-size:12px;color:#fff;letter-spacing:0.026px;-webkit-text-stroke:.3px #fff;">div.grid-stack-item.ui-draggable.ui-resizable.ui-resizable-autohide.ui-draggable-disabled.ui-resizable-disabled</span>
<span class="s" style="left:215px;top:557px;font-size:12px;color:#303030;letter-spacing:0.016px;">designer grid-stack</span>
<span class="s" style="left:927.5px;top:557px;font-size:12px;color:#9a9a9a;letter-spacing:-0.005px;">1 of 1</span>
<span class="s" style="left:1030px;top:557px;font-size:12px;color:#3a3a3a;letter-spacing:-0.477px;">Cancel</span>
<span class="s" style="left:243px;top:582.5px;font-size:12px;color:#333;letter-spacing:-0.219px;">Console</span>
<span class="s" style="left:249.5px;top:608.5px;font-size:12px;color:#646464;letter-spacing:-0.062px;">top</span>
<span class="s" style="left:304.5px;top:608.5px;font-size:12px;color:#8a8a8a;letter-spacing:-0.195px;">Filter</span>
<span class="s" style="left:535px;top:608.5px;font-size:12px;color:#646464;letter-spacing:0.246px;">Info</span>
<span class="s" style="left:1159.7px;top:608.5px;font-size:12px;color:#9a9a9a;letter-spacing:0.022px;">29 items hidden by filters</span>


</body>
</html>
